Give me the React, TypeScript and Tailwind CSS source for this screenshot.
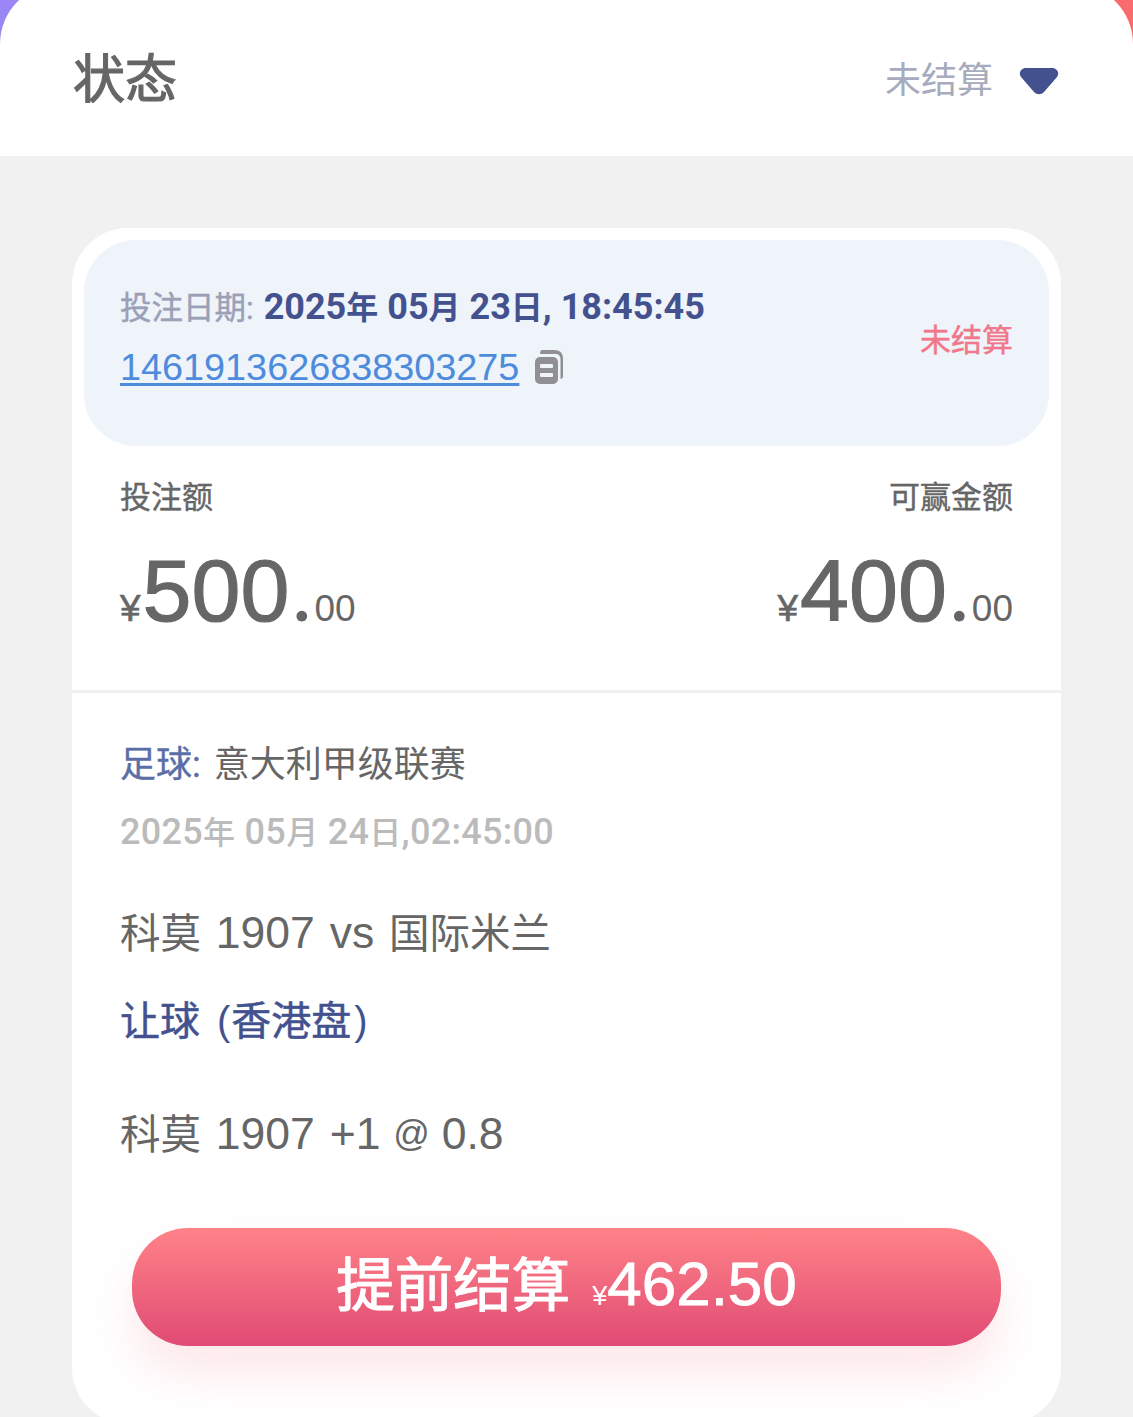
import React from 'react';

const sans = '[font-family:"Liberation_Sans","Noto_Sans_CJK_SC",sans-serif]';
const roboto = '[font-family:Roboto,"Noto_Sans_CJK_SC",sans-serif]';

// CJK runs sit a bit smaller than the digits next to them
function Dated({ y, m, d, sep }: { y: string; m: string; d: string; sep?: string }) {
  return (
    <>
      {y}
      <span className="text-[32px]">年</span> {m}
      <span className="text-[32px]">月</span> {d}
      <span className="text-[32px]">日</span>
      {sep}
    </>
  );
}

function Amount({ whole }: { whole: string }) {
  return (
    <div className={`flex items-baseline text-[#666666] ${sans}`}>
      <span className="mr-[2px] text-[37px] leading-none [-webkit-text-stroke:0.6px_#666666]">¥</span>
      <span className="text-[88px] leading-none [-webkit-text-stroke:1.2px_#666666]">{whole}</span>
      <span className="w-[25px] text-center text-[70px] font-bold leading-none [font-family:Lato,sans-serif]">.</span>
      <span className="text-[37px] leading-none">00</span>
    </div>
  );
}

export default function App() {
  return (
    <div className={`relative h-[1417px] w-[1133px] overflow-hidden bg-[#f1f1f1] ${roboto}`}>
      <div className="h-[156px] overflow-hidden bg-gradient-to-r from-[#9a86f5] from-50% to-[#fb6a6c] to-50%">
        <div className="-mt-[16px] flex h-[172px] items-center justify-between rounded-t-[60px] bg-white pl-[73px] pr-[74px] pt-[18px]">
          <h1 className="mt-[4px] text-[52px] leading-none text-[#666666] [-webkit-text-stroke:1.2px_#666666]">状态</h1>
          <div className="mt-[4px] flex items-center gap-[26px]">
            <span className="text-[36px] leading-none text-[#a6abbd]">未结算</span>
            <svg width="40" height="28" viewBox="0 0 40 28">
              <path d="M7 1h26c5 0 8 5 5 9L25 25c-3 3-7 3-10 0L2 10C-1 6 2 1 7 1z" fill="#43528f" />
            </svg>
          </div>
        </div>
      </div>

      <div className="px-[72px] pt-[72px]">
        <div className="h-[1196px] w-[989px] rounded-[56px] bg-white">
          <div className="p-[12px] pb-0">
            <div className="flex h-[206px] items-center justify-between rounded-[52px] bg-[#eff3fa] px-[36px]">
              <div className="flex flex-col gap-[18px] pb-[12px]">
                <div className="flex items-baseline leading-[40px]">
                  <span className="text-[31.500px] text-[#9aa0b5] [-webkit-text-stroke:0.4px_#9aa0b5]">投注日期:</span>
                  <span className="ml-[10px] whitespace-pre text-[36px] font-bold text-[#43528f]">
                    <Dated y="2025" m="05" d="23" sep=", 18:45:45" />
                  </span>
                </div>
                <div className="flex items-center gap-[15px]">
                  <span className={`text-[37.800px] leading-[40px] text-[#4d8bdc] underline decoration-[3px] underline-offset-[3px] ${sans}`}>1461913626838303275</span>
                  <svg width="30" height="36" viewBox="0 0 30 36">
                    <path d="M8 1h12c6 0 9 3 9 9v17c0 2-1 3-2.500 3V10c0-3-2-5-5-5H6c0-3 1-4 2-4z" fill="#8f8f94" />
                    <rect x="1" y="8" width="23" height="27" rx="5" fill="#8f8f94" />
                    <rect x="6" y="15" width="13" height="4" rx="1" fill="#eff3fa" />
                    <rect x="6" y="24" width="13" height="4" rx="1" fill="#eff3fa" />
                  </svg>
                </div>
              </div>
              <span className="mb-[4px] text-[31px] text-[#f0788a] [-webkit-text-stroke:0.4px_#f0788a]">未结算</span>
            </div>
          </div>

          <div className="h-[247px] border-b-[3px] border-[#f0f0f0] px-[48px] pt-[32px]">
            <div className="flex justify-between text-[31px] leading-[40px] text-[#666666] [-webkit-text-stroke:0.4px_#666666]">
              <span>投注额</span>
              <span>可赢金额</span>
            </div>
            <div className="mt-[29px] flex justify-between">
              <Amount whole="500" />
              <Amount whole="400" />
            </div>
          </div>

          <div className="px-[48px] pt-[50px] text-[#666666]">
            <div className="text-[36px] leading-[44px]">
              <span className="text-[#5b6ea8] [-webkit-text-stroke:0.4px_#5b6ea8]">足球:</span>
              <span className="ml-[13px]">意大利甲级联赛</span>
            </div>
            <div className="mt-[23px] whitespace-pre text-[36px] font-medium leading-[44px] tracking-[0.3px] text-[#bbbbbb]">
              <Dated y="2025" m="05" d="24" sep=",02:45:00" />
            </div>
            <div className={`mt-[52px] text-[44.500px] leading-[52px] [word-spacing:2.500px] ${sans}`}>
              <span className="text-[40.500px]">科莫</span> 1907 vs <span className="text-[40.500px]">国际米兰</span>
            </div>
            <div className={`mt-[35px] text-[40px] leading-[52px] text-[#43528f] ${sans}`}>
              <span className="[-webkit-text-stroke:0.5px_#43528f]">让球</span>
              <span className="ml-[17px]">(</span>
              <span className="ml-[1px] [-webkit-text-stroke:0.5px_#43528f]">香港盘</span>
              <span className="ml-[3px]">)</span>
            </div>
            <div className={`mt-[61px] text-[44.500px] leading-[52px] [word-spacing:2.500px] ${sans}`}>
              <span className="text-[40.500px]">科莫</span> 1907 +1 <span className="-ml-[2px] inline-block -translate-y-[3px] text-[36px]">@</span> <span className="-ml-[3px]">0.8</span>
            </div>
            <div className="ml-[12px] mt-[65px] flex h-[118px] w-[869px] items-center justify-center gap-[22px] rounded-[56px] bg-gradient-to-b from-[#ff8288] to-[#e04a74] text-white shadow-[0_28px_44px_rgba(240,90,110,0.14)]">
              <span className="mb-[2px] text-[58.500px] leading-none [-webkit-text-stroke:1.2px_#ffffff]">提前结算</span>
              <span className={`mb-[6px] flex items-baseline leading-none ${sans}`}>
                <span className="text-[27px]">¥</span>
                <span className="text-[62px] [-webkit-text-stroke:0.8px_#ffffff]">462.50</span>
              </span>
            </div>
          </div>
        </div>
      </div>
    </div>
  );
}
